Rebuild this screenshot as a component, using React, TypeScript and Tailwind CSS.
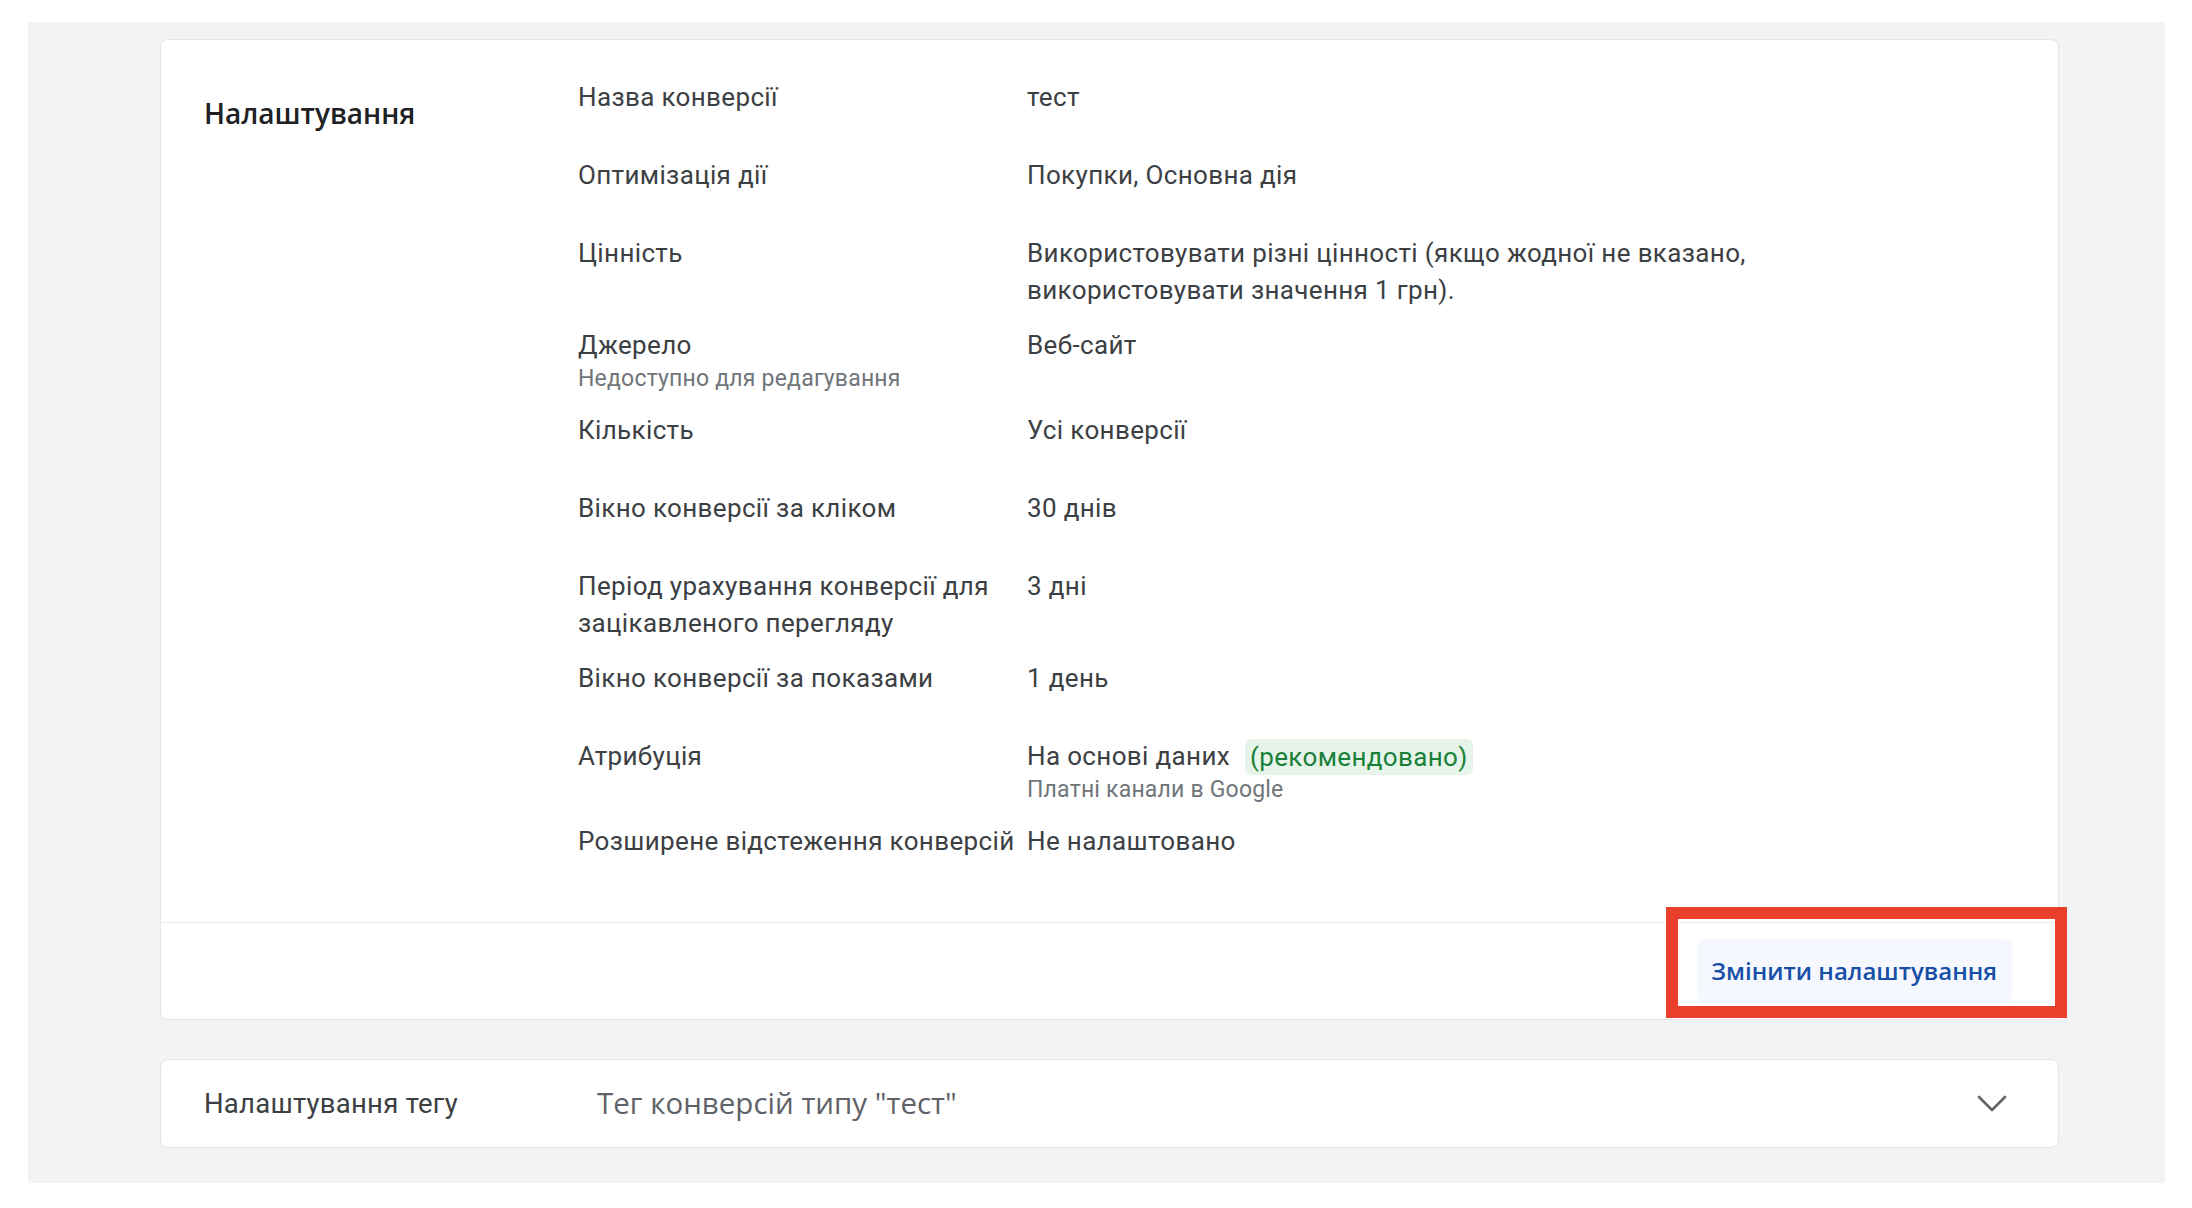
import type {ReactNode} from 'react'

interface SettingRow {
  label: string
  note?: string
  value: ReactNode
}

const rows: SettingRow[] = [
  {label: 'Назва конверсії', value: 'тест'},
  {label: 'Оптимізація дії', value: 'Покупки, Основна дія'},
  {
    label: 'Цінність',
    value: 'Використовувати різні цінності (якщо жодної не вказано, використовувати значення 1 грн).',
  },
  {label: 'Джерело', note: 'Недоступно для редагування', value: 'Веб-сайт'},
  {label: 'Кількість', value: 'Усі конверсії'},
  {label: 'Вікно конверсії за кліком', value: '30 днів'},
  {label: 'Період урахування конверсії для зацікавленого перегляду', value: '3 дні'},
  {label: 'Вікно конверсії за показами', value: '1 день'},
  {
    label: 'Атрибуція',
    value: (
      <>
        <div className="flex items-center">
          <span>На основі даних</span>
          <span className="ml-[15px] rounded-[6px] bg-[#e6f4ea] px-[5px] leading-[36px] text-[#188038]">
            (рекомендовано)
          </span>
        </div>
        <div className="text-[23px] leading-[30px] tracking-[0.2px] text-[#70757a]">Платні канали в Google</div>
      </>
    ),
  },
  {label: 'Розширене відстеження конверсій', value: 'Не налаштовано'},
]

export default function App() {
  return (
    <div className="relative min-h-screen bg-white pt-[22px] font-['Roboto',sans-serif]">
      <div className="ml-[28px] w-[2137px] bg-[#f1f3f4] pb-[35px] pt-[17px]">
        <div className="ml-[132px] w-[1899px] rounded-[8px] border border-[#e3e5e8] bg-white">
          <div className="flex pb-[30px] pt-[30px]">
            <div className="w-[417px] shrink-0 pl-[43px] pt-[25px]">
              <h2 className="font-['Open_Sans',sans-serif] text-[28px] font-semibold leading-[37px] text-[#202124]">
                Налаштування
              </h2>
            </div>
            <div className="flex flex-col">
              {rows.map((row) => (
                <div
                  key={row.label}
                  className="flex min-h-[78px] py-[9px] text-[26px] leading-[37px] tracking-[0.35px] text-[#3c4043]"
                >
                  <div className="w-[449px] shrink-0 pr-[6px]">
                    <div>{row.label}</div>
                    {row.note && (
                      <div className="text-[23px] leading-[30px] tracking-[0.2px] text-[#70757a]">{row.note}</div>
                    )}
                  </div>
                  <div className="w-[740px]">{row.value}</div>
                </div>
              ))}
            </div>
          </div>
          <div className="flex h-[97px] items-center justify-end border-t border-[#e8eaed] pr-[46px]">
            <button className="h-[64px] rounded-[8px] bg-[#f5f8fe] pl-[14px] pr-[15px] font-['Open_Sans',sans-serif] text-[24px] font-semibold text-[#174ea6]">
              Змінити налаштування
            </button>
          </div>
        </div>

        <div className="ml-[132px] mt-[39px] flex h-[89px] w-[1899px] items-center rounded-[8px] border border-[#e3e5e8] bg-white pl-[43px] pr-[51px]">
          <div className="w-[393px] shrink-0 text-[27.5px] tracking-[0.25px] text-[#3c4043]">Налаштування тегу</div>
          <div className="flex-1 font-['Open_Sans',sans-serif] text-[29.5px] text-[#5f6368]">
            Тег конверсій типу "тест"
          </div>
          <svg width="30" height="18" viewBox="0 0 30 18" fill="none">
            <path d="M2 2l13 13L28 2" stroke="#5f6368" strokeWidth="2.6" strokeLinecap="round" strokeLinejoin="round" />
          </svg>
        </div>
      </div>

      {/* highlight frame around the edit button */}
      <div className="absolute left-[1666px] top-[907px] h-[111px] w-[401px] border-[12px] border-[#e8402a]" />
    </div>
  )
}
